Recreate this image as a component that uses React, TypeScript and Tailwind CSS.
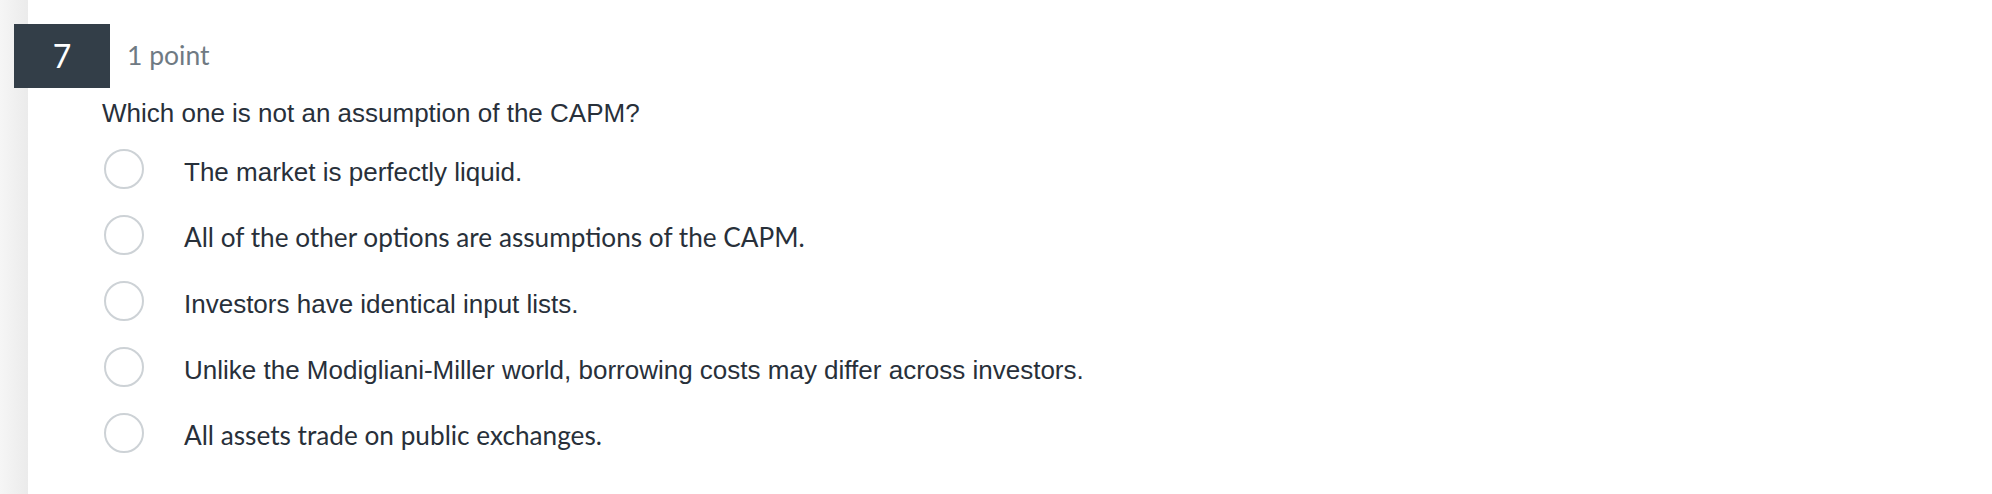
const arial = { fontFamily: '"Liberation Sans", Arial, sans-serif' };

const options = [
  { text: "The market is perfectly liquid.", font: "arial" },
  { text: "All of the other options are assumptions of the CAPM.", font: "lato" },
  { text: "Investors have identical input lists.", font: "arial" },
  { text: "Unlike the Modigliani-Miller world, borrowing costs may differ across investors.", font: "arial" },
  { text: "All assets trade on public exchanges.", font: "lato" },
];

export default function App() {
  return (
    <div className="flex h-[494px] w-full bg-white">
      <div className="w-[28px] shrink-0 bg-gradient-to-r from-[#f6f6f6] to-[#ebebeb]" />
      <div className="flex-1 pt-[24px]">
        <div className="flex items-center font-['Lato',sans-serif]">
          <div className="-ml-[14px] flex h-[64px] w-[96px] items-center justify-center bg-[#333e48] text-[32px] text-white">
            7
          </div>
          <span className="ml-[17px] text-[26.5px] text-[#6f7a83]">1 point</span>
        </div>

        <p className="ml-[74px] mt-[9px] text-[26px] leading-[32px] text-[#28303a]" style={arial}>
          Which one is not an assumption of the CAPM?
        </p>

        <ul className="ml-[76px] mt-[7px]">
          {options.map((opt) => (
            <li key={opt.text} className="flex h-[66px] items-center gap-[40px]">
              <span className="h-[40px] w-[40px] shrink-0 rounded-full border-2 border-[#cdd2d6]" />
              <span
                className={
                  opt.font === "lato"
                    ? "mt-[6px] font-['Lato',sans-serif] text-[26.2px] text-[#28303a]"
                    : "mt-[6px] text-[26px] text-[#28303a]"
                }
                style={opt.font === "arial" ? arial : undefined}
              >
                {opt.text}
              </span>
            </li>
          ))}
        </ul>
      </div>
    </div>
  );
}
